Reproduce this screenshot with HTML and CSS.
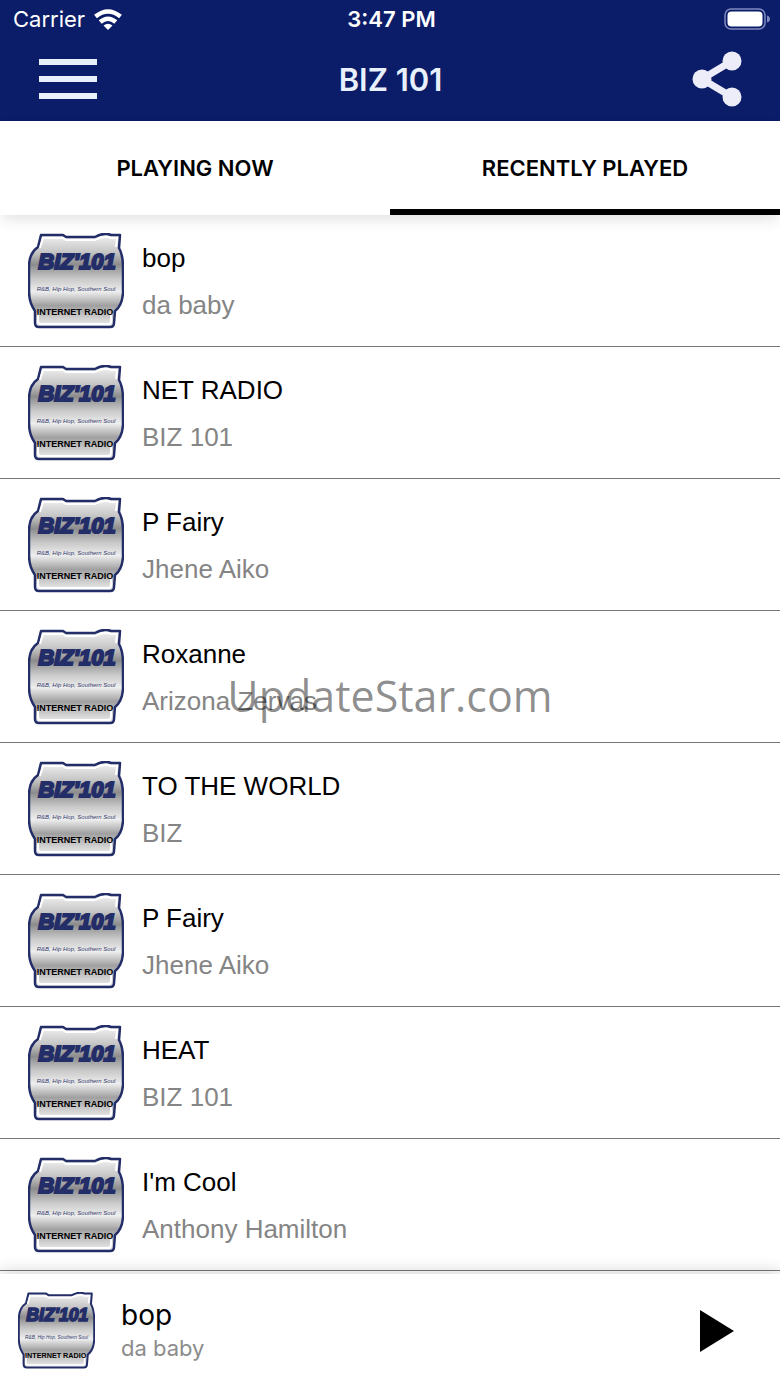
FILE: index.html
```html
<!DOCTYPE html>
<html lang="en">
<head>
<meta charset="utf-8">
<meta name="viewport" content="width=device-width, initial-scale=1">
<title>BIZ 101</title>
<link rel="stylesheet" href="styles.css">
</head>
<body>
<svg class="defs" aria-hidden="true">
  <defs>
    <linearGradient id="silver" x1="0" y1="0" x2="0" y2="1">
      <stop offset="0" stop-color="#f4f4f4"/>
      <stop offset=".2" stop-color="#c4c4c4"/>
      <stop offset=".33" stop-color="#8c8c8c"/>
      <stop offset=".48" stop-color="#c8c8c8"/>
      <stop offset=".62" stop-color="#eeeeee"/>
      <stop offset=".77" stop-color="#a0a0a0"/>
      <stop offset="1" stop-color="#f0f0f0"/>
    </linearGradient>
    <symbol id="logo" viewBox="0 0 96 96">
      <path d="M13 2H35L38 4H67Q76-1 83 2H92L91 15Q95 22 95 34V60Q94 73 87 78L86 90Q86 94 82 94H11Q7 94 7 90V78Q1 70 1 58V34Q1 20 10 14Z" fill="url(#silver)" stroke="#232d68" stroke-width="2.500" stroke-linejoin="round"/>
      <path d="M12 15L15 5H35L38 7H67Q76 2 83 5H89L88 14M10 80V88Q10 91 13 91H80Q83 91 83 88V80" fill="none" stroke="#fff" stroke-width="2"/>
      <text class="logo-name" x="49" y="36" text-anchor="middle">BIZ'101</text>
      <text class="logo-genre" x="48" y="58" text-anchor="middle">R&amp;B, Hip Hop, Southern Soul</text>
      <text class="logo-kind" x="47" y="82" text-anchor="middle">INTERNET RADIO</text>
    </symbol>
  </defs>
</svg>

<header class="top">
  <div class="status">
    <div class="carrier">Carrier
      <svg class="wifi" viewBox="0 0 28 21" aria-hidden="true"><g fill="none" stroke="#fff" stroke-width="4.500"><path d="M1.500 7.500Q14-2.500 26.500 7.500"/><path d="M6.200 13Q14 6.500 21.800 13"/></g><path d="M9.500 16.500Q14 13 18.500 16.500L14 21Z" fill="#fff"/></svg>
    </div>
    <div class="clock">3:47 PM</div>
    <svg class="battery" viewBox="0 0 46 22" aria-hidden="true"><rect x="1" y="1" width="40" height="20" rx="6" fill="none" stroke="#8089bd" stroke-width="1.500"/><rect x="3.500" y="3.500" width="35" height="15" rx="4" fill="#fff"/><path d="M43 7.500Q46 8.500 46 11T43 14.500Z" fill="#8089bd"/></svg>
  </div>
  <div class="bar">
    <button class="icon-button" type="button" aria-label="Menu"><svg class="menu" viewBox="0 0 58 40" fill="#e8f0fc"><path d="M0 0H58V6H0ZM0 17H58V23H0ZM0 34H58V40H0Z"/></svg></button>
    <h1 class="heading">BIZ 101</h1>
    <button class="icon-button share-button" type="button" aria-label="Share"><svg class="share" viewBox="0 0 50 56" fill="#ecedf8"><path d="M40 10L10 28L40 46" fill="none" stroke="#ecedf8" stroke-width="7"/><circle cx="40" cy="10" r="9.500"/><circle cx="10" cy="28" r="9.500"/><circle cx="40" cy="46" r="9.500"/></svg></button>
  </div>
</header>

<nav class="tabs">
  <button class="tab" type="button">PLAYING NOW</button>
  <button class="tab tab-active" type="button" aria-current="true">RECENTLY PLAYED</button>
</nav>

<main>
  <ul class="tracks">
    <li class="track"><svg class="cover" role="img" aria-label="BIZ 101"><use href="#logo"/></svg><div><div class="title">bop</div><div class="artist">da baby</div></div></li>
    <li class="track"><svg class="cover" role="img" aria-label="BIZ 101"><use href="#logo"/></svg><div><div class="title">NET RADIO</div><div class="artist">BIZ 101</div></div></li>
    <li class="track"><svg class="cover" role="img" aria-label="BIZ 101"><use href="#logo"/></svg><div><div class="title">P Fairy</div><div class="artist">Jhene Aiko</div></div></li>
    <li class="track"><svg class="cover" role="img" aria-label="BIZ 101"><use href="#logo"/></svg><div><div class="title">Roxanne</div><div class="artist">Arizona Zervas</div></div></li>
    <li class="track"><svg class="cover" role="img" aria-label="BIZ 101"><use href="#logo"/></svg><div><div class="title">TO THE WORLD</div><div class="artist">BIZ</div></div></li>
    <li class="track"><svg class="cover" role="img" aria-label="BIZ 101"><use href="#logo"/></svg><div><div class="title">P Fairy</div><div class="artist">Jhene Aiko</div></div></li>
    <li class="track"><svg class="cover" role="img" aria-label="BIZ 101"><use href="#logo"/></svg><div><div class="title">HEAT</div><div class="artist">BIZ 101</div></div></li>
    <li class="track"><svg class="cover" role="img" aria-label="BIZ 101"><use href="#logo"/></svg><div><div class="title">I'm Cool</div><div class="artist">Anthony Hamilton</div></div></li>
  </ul>
</main>

<footer class="player">
  <svg class="cover cover-small" role="img" aria-label="BIZ 101"><use href="#logo"/></svg>
  <div class="now">
    <div class="now-title">bop</div>
    <div class="now-artist">da baby</div>
  </div>
  <button class="icon-button play-button" type="button" aria-label="Play"><svg class="play" viewBox="0 0 34 42"><path d="M0 0L34 21L0 42Z"/></svg></button>
</footer>

<div class="watermark">UpdateStar.com</div>
</body>
</html>
```

FILE: styles.css
```css
* { box-sizing: border-box; }

body {
  position: relative;
  display: flex;
  flex-direction: column;
  min-height: 100vh;
  margin: 0;
  background: #fff;
  color: #000;
  font-family: "Liberation Sans", Arial, sans-serif;
}

svg { display: block; flex: none; }
button { border: 0; padding: 0; background: none; color: inherit; cursor: pointer; }

.defs { position: absolute; width: 0; height: 0; }

.top {
  background: #0b1c68;
  color: #fff;
  font-family: Inter, sans-serif;
}

.status {
  display: grid;
  grid-template-columns: 1fr auto 1fr;
  align-items: center;
  height: 38px;
  padding: 0 10px 0 13px;
  font-size: 22px;
  line-height: 36px;
}
.carrier { display: flex; align-items: center; gap: 9px; }
.wifi { width: 28px; height: 21px; }
.clock { font-weight: 600; }
.battery { width: 46px; height: 22px; justify-self: end; }

.bar {
  display: grid;
  grid-template-columns: 1fr auto 1fr;
  align-items: center;
  height: 83px;
  padding: 0 38px 2px 39px;
}
.icon-button { display: block; justify-self: start; }
.share-button { justify-self: end; }
.menu { width: 58px; height: 40px; }
.share { width: 50px; height: 56px; }
.heading { margin: 0; padding-top: 2px; color: #e8f0fc; font-size: 31px; font-weight: 600; line-height: 40px; }

.tabs {
  position: relative;
  display: grid;
  grid-template-columns: 1fr 1fr;
  height: 94px;
  background: #fff;
  box-shadow: 0 6px 14px -2px rgba(0, 0, 0, .12);
}
.tab {
  border-top: 6px solid transparent;
  border-bottom: 6px solid transparent;
  font: 600 22px/28px Inter, sans-serif;
}
.tab-active { border-bottom-color: #000; }

.tracks { margin: 0; padding: 0; list-style: none; }
.track {
  display: flex;
  align-items: center;
  gap: 18px;
  height: 132px;
  padding: 0 28px;
  border-bottom: 1px solid #777;
}
.cover { width: 96px; height: 96px; }
.title, .artist { font-size: 26px; line-height: 47px; }
.title { padding-top: 2px; }
.artist { color: #858585; }

.logo-name {
  fill: #232d68;
  stroke: #232d68;
  stroke-width: 2px;
  font: italic 700 22px "Liberation Sans", Arial, sans-serif;
}
.logo-genre { fill: #343c70; font: italic 400 6px "Liberation Sans", Arial, sans-serif; }
.logo-kind { fill: #000; font: 700 9px "Liberation Sans", Arial, sans-serif; }

.player {
  position: relative;
  display: flex;
  align-items: center;
  flex: 1;
  min-height: 113px;
  margin-top: 3px;
  padding: 0 46px 0 18px;
  background: #fff;
  box-shadow: 0 -4px 14px rgba(0, 0, 0, .14);
}
.cover-small { width: 77px; height: 77px; }
.now { flex: 1; margin-left: 26px; font-family: Inter, sans-serif; }
.now-title { font-size: 28px; line-height: 35px; }
.now-artist { color: #8c8c8c; font-size: 22px; line-height: 30px; }
.play { width: 34px; height: 42px; }

.watermark {
  position: absolute;
  inset: 0;
  display: grid;
  place-items: center;
  padding-top: 4px;
  color: rgba(0, 0, 0, .45);
  font: 400 43px/60px "Open Sans", "Noto Sans", sans-serif;
  pointer-events: none;
}
```
